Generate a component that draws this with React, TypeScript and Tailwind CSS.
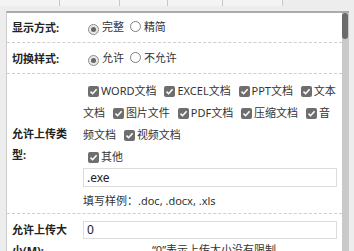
const tabs = [
  { label: '基本', w: 'w-[60px]', active: false },
  { label: '属性', w: 'w-[60px]', active: true },
  { label: '事件', w: 'w-[48px]', active: false },
  { label: 'HTML', w: 'w-[55px]', active: false },
  { label: '校验', w: 'w-[60px]', active: false },
];

const fileTypes = ['WORD文档', 'EXCEL文档', 'PPT文档', '文本文档', '图片文件', 'PDF文档', '压缩文档', '音频文档', '视频文档'];

function Radio({ checked }: { checked?: boolean }) {
  return (
    <span
      className={
        'inline-flex items-center justify-center w-[11px] h-[11px] rounded-full border align-[-1px] mr-[3px] ' +
        (checked ? 'ml-[5px] border-[#8c8c8c] bg-[#e8e8e8]' : 'ml-[3px] border-[#808080] bg-white')
      }
    >
      {checked && <span className="w-[5px] h-[5px] rounded-full bg-[#666]" />}
    </span>
  );
}

function Check() {
  return (
    <span className="inline-flex items-center justify-center w-[11px] h-[11px] rounded-[2px] bg-[#6e6e6e] align-[-1px] ml-[5px] mr-[2px]">
      <svg width="9" height="9" viewBox="0 0 9 9">
        <path d="M1.5 4.6 L3.6 6.7 L7.6 2.2" fill="none" stroke="#fff" strokeWidth="1.6" />
      </svg>
    </span>
  );
}

function Row({ label, children, className }: { label: string; children: React.ReactNode; className?: string }) {
  return (
    <div className={'flex items-center border-b border-dashed border-[#cfcfcf] ' + (className ?? '')}>
      <div className="w-[76px] shrink-0 pl-[5px] pr-[11px] font-bold text-[#222] leading-[21px]">{label}</div>
      <div className="flex-1 pr-[5px] text-[#333]">{children}</div>
    </div>
  );
}

export default function App() {
  return (
    <div className="w-[354px] h-[251px] overflow-hidden bg-[#ededed] flex flex-col text-[11px] [font-family:'Noto_Sans','Noto_Sans_CJK_SC',sans-serif]">
      {/* tab strip, scrolled mostly out of view */}
      <div className="h-[6px] shrink-0 overflow-hidden">
        <div className="flex -mt-[18px]">
          {tabs.map((t) => (
            <div
              key={t.label}
              className={
                t.w +
                ' h-[24px] flex items-center justify-center border-r border-[#c8c8c8] bg-[#f4f4f4] text-[12px] ' +
                (t.active ? 'text-[#d9413a]' : 'text-[#222]')
              }
            >
              {t.label}
            </div>
          ))}
        </div>
      </div>

      <div className="mt-[5px] ml-[6px] mr-[5px] flex-1 flex min-h-0 bg-white border-t-2 border-t-[#ababab] border-l border-l-[#cccccc]">
        <div className="flex-1 min-w-0">
          <Row label="显示方式:" className="h-[30px]">
            <Radio checked />完整 <Radio />精简
          </Row>
          <Row label="切换样式:" className="h-[31px]">
            <Radio checked />允许 <Radio />不允许
          </Row>
          <Row label="允许上传类型:" className="h-[140px]">
            <div className="pt-[4px] leading-[22px]">
              {fileTypes.map((f) => (
                <label key={f}>
                  <Check />
                  {f}{' '}
                </label>
              ))}
              <div>
                <Check />
                其他
              </div>
            </div>
            <div className="h-[19px] border border-[#dcdcdc] pl-[3px] text-[12px] leading-[17px] text-[#222]">.exe</div>
            <div className="mt-[3px] leading-[22px]">填写样例：.doc, .docx, .xls</div>
          </Row>
          <Row label="允许上传大小(M):">
            <div className="pt-[7px] pb-[4px]">
              <div className="h-[18px] border border-[#dcdcdc] pl-[3px] text-[12px] leading-[16px] text-[#222]">0</div>
              <div className="leading-[22px] text-center pl-[8px]">“0”表示上传大小没有限制</div>
            </div>
          </Row>
        </div>
        <div className="w-[7px] shrink-0 bg-[#c9c9c9]">
          <div className="w-[6px] h-[26px] rounded-[3px] bg-[#6b6b6b]" />
        </div>
      </div>
    </div>
  );
}
